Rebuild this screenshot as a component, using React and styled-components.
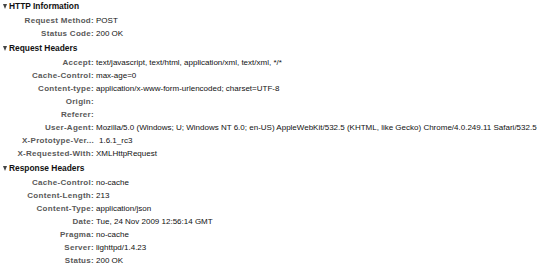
import React from "react";
import styled, { createGlobalStyle } from "styled-components";

const GlobalStyle = createGlobalStyle`
  html, body {
    margin: 0;
    padding: 0;
    background: #fff;
  }
  body {
    font-family: "Liberation Sans", Arial, sans-serif;
    font-size: 8px;
    color: #000;
    overflow: hidden;
  }
`;

const Panel = styled.div`
  width: 540px;
  height: 265px;
  overflow: hidden;
`;

const Section = styled.section`
  margin-top: ${(p) => (p.$first ? "0" : "2px")};
`;

const Header = styled.div`
  display: flex;
  align-items: center;
  height: 13px;
  line-height: 13px;
  margin-bottom: 1px;
  padding-left: 3px;
  font-size: 8.4px;
  font-weight: bold;
  color: #111;
  white-space: nowrap;
`;

const Arrow = styled.span`
  display: inline-block;
  width: 0;
  height: 0;
  border-left: 2.5px solid transparent;
  border-right: 2.5px solid transparent;
  border-top: 5px solid #444;
  margin-right: 2px;
`;

const Row = styled.div`
  display: grid;
  grid-template-columns: 94px 1fr;
  column-gap: 2px;
  height: 13px;
  line-height: 13px;
  white-space: nowrap;
`;

const Label = styled.span`
  text-align: right;
  font-weight: bold;
  letter-spacing: 0.3px;
  color: #585858;
  overflow: hidden;
`;

const Value = styled.span`
  color: #111;
  padding-left: ${(p) => (p.$shift ? "3px" : "0")};
`;

const sections = [
  {
    title: "HTTP Information",
    rows: [
      ["Request Method:", "POST"],
      ["Status Code:", "200 OK"],
    ],
  },
  {
    title: "Request Headers",
    rows: [
      ["Accept:", "text/javascript, text/html, application/xml, text/xml, */*"],
      ["Cache-Control:", "max-age=0"],
      ["Content-type:", "application/x-www-form-urlencoded; charset=UTF-8"],
      ["Origin:", ""],
      ["Referer:", ""],
      [
        "User-Agent:",
        "Mozilla/5.0 (Windows; U; Windows NT 6.0; en-US) AppleWebKit/532.5 (KHTML, like Gecko) Chrome/4.0.249.11 Safari/532.5",
      ],
      ["X-Prototype-Ver...", "1.6.1_rc3", true],
      ["X-Requested-With:", "XMLHttpRequest"],
    ],
  },
  {
    title: "Response Headers",
    rows: [
      ["Cache-Control:", "no-cache"],
      ["Content-Length:", "213"],
      ["Content-Type:", "application/json"],
      ["Date:", "Tue, 24 Nov 2009 12:56:14 GMT"],
      ["Pragma:", "no-cache"],
      ["Server:", "lighttpd/1.4.23"],
      ["Status:", "200 OK"],
    ],
  },
];

export default function App() {
  return (
    <>
      <GlobalStyle />
      <Panel>
        {sections.map((s, i) => (
          <Section key={s.title} $first={i === 0}>
            <Header>
              <Arrow />
              {s.title}
            </Header>
            {s.rows.map(([label, value, shift]) => (
              <Row key={label}>
                <Label>{label}</Label>
                <Value $shift={shift}>{value}</Value>
              </Row>
            ))}
          </Section>
        ))}
      </Panel>
    </>
  );
}
